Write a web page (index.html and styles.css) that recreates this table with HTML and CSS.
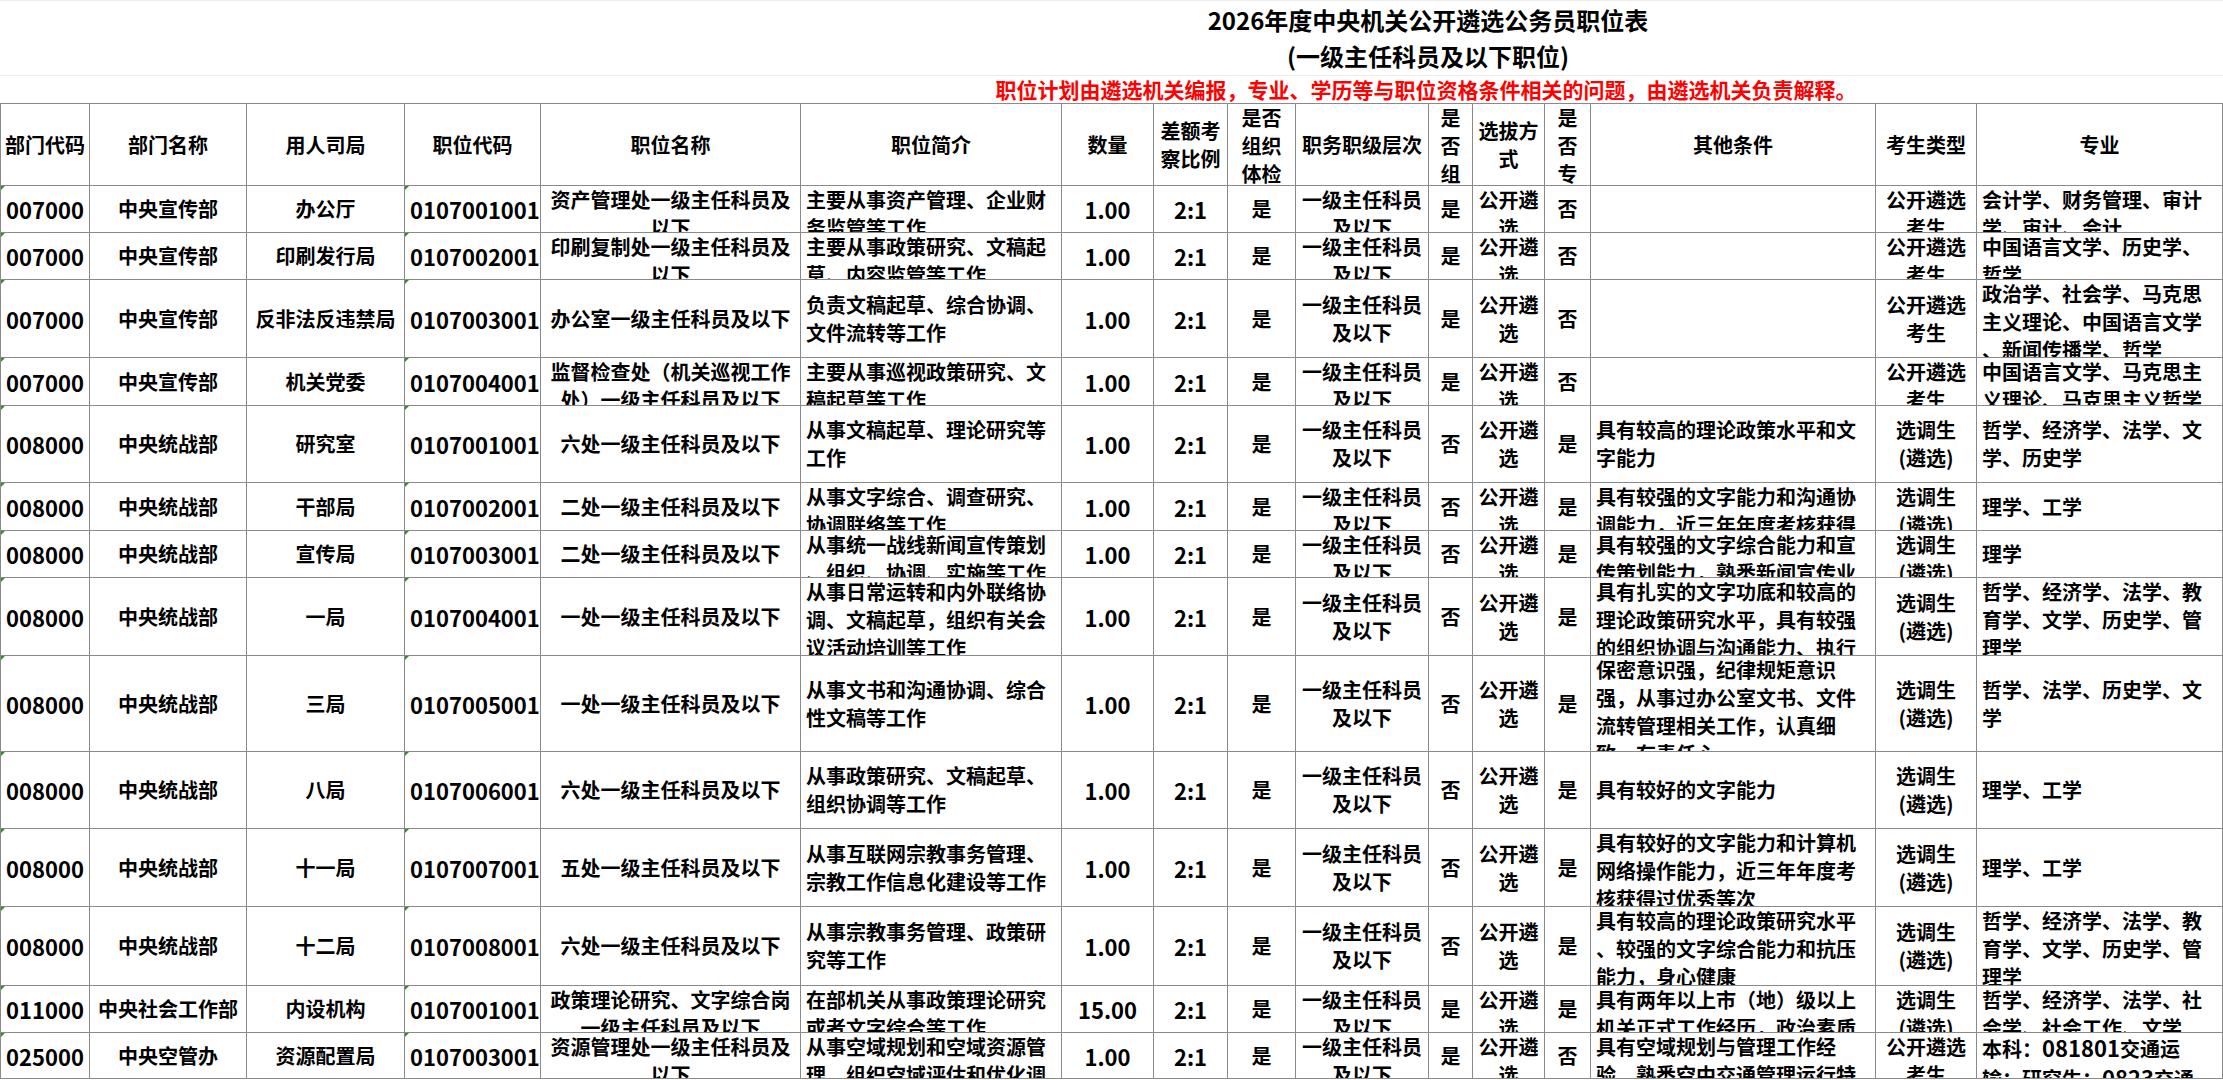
FILE: index.html
```html
<!DOCTYPE html>
<html lang="zh-CN">
<head>
<meta charset="utf-8">
<title>2026年度中央机关公开遴选公务员职位表</title>
<link rel="stylesheet" href="styles.css">
</head>
<body>
<div class="title-row">
  <div class="title">2026年度中央机关公开遴选公务员职位表</div>
  <div class="title">(一级主任科员及以下职位)</div>
</div>
<div class="note-row">职位计划由遴选机关编报，专业、学历等与职位资格条件相关的问题，由遴选机关负责解释。</div>
<div class="grid">
  <div class="c hd p3"><span>部门代码</span></div>
  <div class="c hd"><span>部门名称</span></div>
  <div class="c hd"><span>用人司局</span></div>
  <div class="c hd"><span>职位代码</span></div>
  <div class="c hd"><span>职位名称</span></div>
  <div class="c hd"><span>职位简介</span></div>
  <div class="c hd"><span>数量</span></div>
  <div class="c hd"><span>差额考察比例</span></div>
  <div class="c hd"><span>是否组织体检</span></div>
  <div class="c hd"><span>职务职级层次</span></div>
  <div class="c hd"><span>是否组织专业能力测试</span></div>
  <div class="c hd"><span>选拔方式</span></div>
  <div class="c hd"><span>是否专门面向选调生</span></div>
  <div class="c hd"><span>其他条件</span></div>
  <div class="c hd"><span>考生类型</span></div>
  <div class="c hd"><span>专业</span></div>

  <div class="c p3 n tx"><span>007000</span></div>
  <div class="c"><span>中央宣传部</span></div>
  <div class="c"><span>办公厅</span></div>
  <div class="c n tx"><span>0107001001</span></div>
  <div class="c"><span>资产管理处一级主任科员及以下</span></div>
  <div class="c l"><span>主要从事资产管理、企业财务监管等工作</span></div>
  <div class="c n"><span>1.00</span></div>
  <div class="c n"><span>2:1</span></div>
  <div class="c"><span>是</span></div>
  <div class="c"><span>一级主任科员及以下</span></div>
  <div class="c"><span>是</span></div>
  <div class="c"><span>公开遴选</span></div>
  <div class="c"><span>否</span></div>
  <div class="c l"><span></span></div>
  <div class="c"><span>公开遴选考生</span></div>
  <div class="c l"><span>会计学、财务管理、审计学、审计、会计</span></div>

  <div class="c p3 n tx"><span>007000</span></div>
  <div class="c"><span>中央宣传部</span></div>
  <div class="c"><span>印刷发行局</span></div>
  <div class="c n tx"><span>0107002001</span></div>
  <div class="c"><span>印刷复制处一级主任科员及以下</span></div>
  <div class="c l"><span>主要从事政策研究、文稿起草、内容监管等工作</span></div>
  <div class="c n"><span>1.00</span></div>
  <div class="c n"><span>2:1</span></div>
  <div class="c"><span>是</span></div>
  <div class="c"><span>一级主任科员及以下</span></div>
  <div class="c"><span>是</span></div>
  <div class="c"><span>公开遴选</span></div>
  <div class="c"><span>否</span></div>
  <div class="c l"><span></span></div>
  <div class="c"><span>公开遴选考生</span></div>
  <div class="c l"><span>中国语言文学、历史学、哲学</span></div>

  <div class="c p3 n tx"><span>007000</span></div>
  <div class="c"><span>中央宣传部</span></div>
  <div class="c"><span>反非法反违禁局</span></div>
  <div class="c n tx"><span>0107003001</span></div>
  <div class="c"><span>办公室一级主任科员及以下</span></div>
  <div class="c l"><span>负责文稿起草、综合协调、文件流转等工作</span></div>
  <div class="c n"><span>1.00</span></div>
  <div class="c n"><span>2:1</span></div>
  <div class="c"><span>是</span></div>
  <div class="c"><span>一级主任科员及以下</span></div>
  <div class="c"><span>是</span></div>
  <div class="c"><span>公开遴选</span></div>
  <div class="c"><span>否</span></div>
  <div class="c l"><span></span></div>
  <div class="c"><span>公开遴选考生</span></div>
  <div class="c l any"><span>政治学、社会学、马克思主义理论、中国语言文学、新闻传播学、哲学</span></div>

  <div class="c p3 n tx"><span>007000</span></div>
  <div class="c"><span>中央宣传部</span></div>
  <div class="c"><span>机关党委</span></div>
  <div class="c n tx"><span>0107004001</span></div>
  <div class="c"><span>监督检查处（机关巡视工作处）一级主任科员及以下</span></div>
  <div class="c l"><span>主要从事巡视政策研究、文稿起草等工作</span></div>
  <div class="c n"><span>1.00</span></div>
  <div class="c n"><span>2:1</span></div>
  <div class="c"><span>是</span></div>
  <div class="c"><span>一级主任科员及以下</span></div>
  <div class="c"><span>是</span></div>
  <div class="c"><span>公开遴选</span></div>
  <div class="c"><span>否</span></div>
  <div class="c l"><span></span></div>
  <div class="c"><span>公开遴选考生</span></div>
  <div class="c l"><span>中国语言文学、马克思主义理论、马克思主义哲学</span></div>

  <div class="c p3 n tx"><span>008000</span></div>
  <div class="c"><span>中央统战部</span></div>
  <div class="c"><span>研究室</span></div>
  <div class="c n tx"><span>0107001001</span></div>
  <div class="c"><span>六处一级主任科员及以下</span></div>
  <div class="c l"><span>从事文稿起草、理论研究等工作</span></div>
  <div class="c n"><span>1.00</span></div>
  <div class="c n"><span>2:1</span></div>
  <div class="c"><span>是</span></div>
  <div class="c"><span>一级主任科员及以下</span></div>
  <div class="c"><span>否</span></div>
  <div class="c"><span>公开遴选</span></div>
  <div class="c"><span>是</span></div>
  <div class="c l"><span>具有较高的理论政策水平和文字能力</span></div>
  <div class="c"><span>选调生<span class="nw">(遴选)</span></span></div>
  <div class="c l"><span>哲学、经济学、法学、文学、历史学</span></div>

  <div class="c p3 n tx"><span>008000</span></div>
  <div class="c"><span>中央统战部</span></div>
  <div class="c"><span>干部局</span></div>
  <div class="c n tx"><span>0107002001</span></div>
  <div class="c"><span>二处一级主任科员及以下</span></div>
  <div class="c l"><span>从事文字综合、调查研究、协调联络等工作</span></div>
  <div class="c n"><span>1.00</span></div>
  <div class="c n"><span>2:1</span></div>
  <div class="c"><span>是</span></div>
  <div class="c"><span>一级主任科员及以下</span></div>
  <div class="c"><span>否</span></div>
  <div class="c"><span>公开遴选</span></div>
  <div class="c"><span>是</span></div>
  <div class="c l"><span>具有较强的文字能力和沟通协调能力，近三年年度考核获得过优秀等次</span></div>
  <div class="c"><span>选调生<span class="nw">(遴选)</span></span></div>
  <div class="c l"><span>理学、工学</span></div>

  <div class="c p3 n tx"><span>008000</span></div>
  <div class="c"><span>中央统战部</span></div>
  <div class="c"><span>宣传局</span></div>
  <div class="c n tx"><span>0107003001</span></div>
  <div class="c"><span>二处一级主任科员及以下</span></div>
  <div class="c l any"><span>从事统一战线新闻宣传策划、组织、协调、实施等工作</span></div>
  <div class="c n"><span>1.00</span></div>
  <div class="c n"><span>2:1</span></div>
  <div class="c"><span>是</span></div>
  <div class="c"><span>一级主任科员及以下</span></div>
  <div class="c"><span>否</span></div>
  <div class="c"><span>公开遴选</span></div>
  <div class="c"><span>是</span></div>
  <div class="c l"><span>具有较强的文字综合能力和宣传策划能力，熟悉新闻宣传业务</span></div>
  <div class="c"><span>选调生<span class="nw">(遴选)</span></span></div>
  <div class="c l"><span>理学</span></div>

  <div class="c p3 n tx"><span>008000</span></div>
  <div class="c"><span>中央统战部</span></div>
  <div class="c"><span>一局</span></div>
  <div class="c n tx"><span>0107004001</span></div>
  <div class="c"><span>一处一级主任科员及以下</span></div>
  <div class="c l"><span>从事日常运转和内外联络协调、文稿起草，组织有关会议活动培训等工作</span></div>
  <div class="c n"><span>1.00</span></div>
  <div class="c n"><span>2:1</span></div>
  <div class="c"><span>是</span></div>
  <div class="c"><span>一级主任科员及以下</span></div>
  <div class="c"><span>否</span></div>
  <div class="c"><span>公开遴选</span></div>
  <div class="c"><span>是</span></div>
  <div class="c l"><span>具有扎实的文字功底和较高的理论政策研究水平，具有较强的组织协调与沟通能力、执行能力</span></div>
  <div class="c"><span>选调生<span class="nw">(遴选)</span></span></div>
  <div class="c l"><span>哲学、经济学、法学、教育学、文学、历史学、管理学</span></div>

  <div class="c p3 n tx"><span>008000</span></div>
  <div class="c"><span>中央统战部</span></div>
  <div class="c"><span>三局</span></div>
  <div class="c n tx"><span>0107005001</span></div>
  <div class="c"><span>一处一级主任科员及以下</span></div>
  <div class="c l"><span>从事文书和沟通协调、综合性文稿等工作</span></div>
  <div class="c n"><span>1.00</span></div>
  <div class="c n"><span>2:1</span></div>
  <div class="c"><span>是</span></div>
  <div class="c"><span>一级主任科员及以下</span></div>
  <div class="c"><span>否</span></div>
  <div class="c"><span>公开遴选</span></div>
  <div class="c"><span>是</span></div>
  <div class="c l"><span>保密意识强，纪律规矩意识强，从事过办公室文书、文件流转管理相关工作，认真细致、有责任心</span></div>
  <div class="c"><span>选调生<span class="nw">(遴选)</span></span></div>
  <div class="c l"><span>哲学、法学、历史学、文学</span></div>

  <div class="c p3 n tx"><span>008000</span></div>
  <div class="c"><span>中央统战部</span></div>
  <div class="c"><span>八局</span></div>
  <div class="c n tx"><span>0107006001</span></div>
  <div class="c"><span>六处一级主任科员及以下</span></div>
  <div class="c l"><span>从事政策研究、文稿起草、组织协调等工作</span></div>
  <div class="c n"><span>1.00</span></div>
  <div class="c n"><span>2:1</span></div>
  <div class="c"><span>是</span></div>
  <div class="c"><span>一级主任科员及以下</span></div>
  <div class="c"><span>否</span></div>
  <div class="c"><span>公开遴选</span></div>
  <div class="c"><span>是</span></div>
  <div class="c l"><span>具有较好的文字能力</span></div>
  <div class="c"><span>选调生<span class="nw">(遴选)</span></span></div>
  <div class="c l"><span>理学、工学</span></div>

  <div class="c p3 n tx"><span>008000</span></div>
  <div class="c"><span>中央统战部</span></div>
  <div class="c"><span>十一局</span></div>
  <div class="c n tx"><span>0107007001</span></div>
  <div class="c"><span>五处一级主任科员及以下</span></div>
  <div class="c l"><span>从事互联网宗教事务管理、宗教工作信息化建设等工作</span></div>
  <div class="c n"><span>1.00</span></div>
  <div class="c n"><span>2:1</span></div>
  <div class="c"><span>是</span></div>
  <div class="c"><span>一级主任科员及以下</span></div>
  <div class="c"><span>否</span></div>
  <div class="c"><span>公开遴选</span></div>
  <div class="c"><span>是</span></div>
  <div class="c l"><span>具有较好的文字能力和计算机网络操作能力，近三年年度考核获得过优秀等次</span></div>
  <div class="c"><span>选调生<span class="nw">(遴选)</span></span></div>
  <div class="c l"><span>理学、工学</span></div>

  <div class="c p3 n tx"><span>008000</span></div>
  <div class="c"><span>中央统战部</span></div>
  <div class="c"><span>十二局</span></div>
  <div class="c n tx"><span>0107008001</span></div>
  <div class="c"><span>六处一级主任科员及以下</span></div>
  <div class="c l"><span>从事宗教事务管理、政策研究等工作</span></div>
  <div class="c n"><span>1.00</span></div>
  <div class="c n"><span>2:1</span></div>
  <div class="c"><span>是</span></div>
  <div class="c"><span>一级主任科员及以下</span></div>
  <div class="c"><span>否</span></div>
  <div class="c"><span>公开遴选</span></div>
  <div class="c"><span>是</span></div>
  <div class="c l any"><span>具有较高的理论政策研究水平、较强的文字综合能力和抗压能力，身心健康</span></div>
  <div class="c"><span>选调生<span class="nw">(遴选)</span></span></div>
  <div class="c l"><span>哲学、经济学、法学、教育学、文学、历史学、管理学</span></div>

  <div class="c p3 n tx"><span>011000</span></div>
  <div class="c"><span>中央社会工作部</span></div>
  <div class="c"><span>内设机构</span></div>
  <div class="c n tx"><span>0107001001</span></div>
  <div class="c"><span>政策理论研究、文字综合岗一级主任科员及以下</span></div>
  <div class="c l"><span>在部机关从事政策理论研究或者文字综合等工作</span></div>
  <div class="c n"><span>15.00</span></div>
  <div class="c n"><span>2:1</span></div>
  <div class="c"><span>是</span></div>
  <div class="c"><span>一级主任科员及以下</span></div>
  <div class="c"><span>是</span></div>
  <div class="c"><span>公开遴选</span></div>
  <div class="c"><span>是</span></div>
  <div class="c l"><span>具有两年以上市（地）级以上机关正式工作经历，政治素质好</span></div>
  <div class="c"><span>选调生<span class="nw">(遴选)</span></span></div>
  <div class="c l"><span>哲学、经济学、法学、社会学、社会工作、文学</span></div>

  <div class="c p3 n tx"><span>025000</span></div>
  <div class="c"><span>中央空管办</span></div>
  <div class="c"><span>资源配置局</span></div>
  <div class="c n tx"><span>0107003001</span></div>
  <div class="c"><span>资源管理处一级主任科员及以下</span></div>
  <div class="c l"><span>从事空域规划和空域资源管理、组织空域评估和优化调整等工作</span></div>
  <div class="c n"><span>1.00</span></div>
  <div class="c n"><span>2:1</span></div>
  <div class="c"><span>是</span></div>
  <div class="c"><span>一级主任科员及以下</span></div>
  <div class="c"><span>是</span></div>
  <div class="c"><span>公开遴选</span></div>
  <div class="c"><span>否</span></div>
  <div class="c l"><span>具有空域规划与管理工作经验，熟悉空中交通管理运行特点</span></div>
  <div class="c"><span>公开遴选考生</span></div>
  <div class="c l narrow any"><span>本科：<span class="dg">081801</span>交通运输；研究生：<span class="dg">0823</span>交通运输工程</span></div>
</div>
</body>
</html>
```
FILE: styles.css
```css
html, body {
  margin: 0;
  padding: 0;
  background: #ffffff;
}

body {
  width: 2223px;
  height: 1080px;
  overflow: hidden;
  font-family: "Noto Sans CJK SC", "Noto Sans", sans-serif;
  font-weight: 700;
  color: #000000;
}

.title-row {
  box-sizing: border-box;
  height: 76px;
  padding-left: 633px;
  border-top: 1px solid #ececec;
  border-bottom: 1px solid #ececec;
  display: flex;
  flex-direction: column;
  justify-content: center;
  align-items: center;
}

.title {
  font-size: 24px;
  line-height: 36px;
  white-space: nowrap;
}

.note-row {
  height: 27px;
  padding-left: 629px;
  text-align: center;
  color: #ff0000;
  font-size: 21px;
  line-height: 27px;
  white-space: nowrap;
}

.grid {
  display: grid;
  grid-template-columns: 90px 157px 158px 136px 260px 261px 92px 74px 68px 133px 44px 72px 46px 285px 101px 246px;
  grid-template-rows: 83px 47px 47px 78px 48px 77px 48px 47px 78px 96px 77px 78px 79px 47px 46px;
}

.c {
  position: relative;
  box-sizing: border-box;
  display: flex;
  overflow: hidden;
  padding: 0 5px;
  border-right: 1px solid #8a8a8a;
  border-bottom: 1px solid #8a8a8a;
  font-size: 20px;
  line-height: 28px;
  text-align: center;
  line-break: normal;
}

.c > span {
  margin: auto 0;
  width: 100%;
}

.grid > .c:nth-child(16n+1) {
  border-left: 1px solid #8a8a8a;
}

.hd {
  border-top: 1px solid #8a8a8a;
}

.p3 {
  padding: 0 3px;
}

.l {
  text-align: left;
}

.any {
  line-break: anywhere;
}

.narrow {
  padding-right: 26px;
}

.n {
  font-size: 22px;
  white-space: nowrap;
}

.nw {
  white-space: nowrap;
}

.dg {
  font-size: 22px;
  white-space: nowrap;
}

.tx::before {
  content: "";
  position: absolute;
  left: 0;
  top: 0;
  border-top: 4px solid #2f8f2f;
  border-right: 4px solid transparent;
}
```
